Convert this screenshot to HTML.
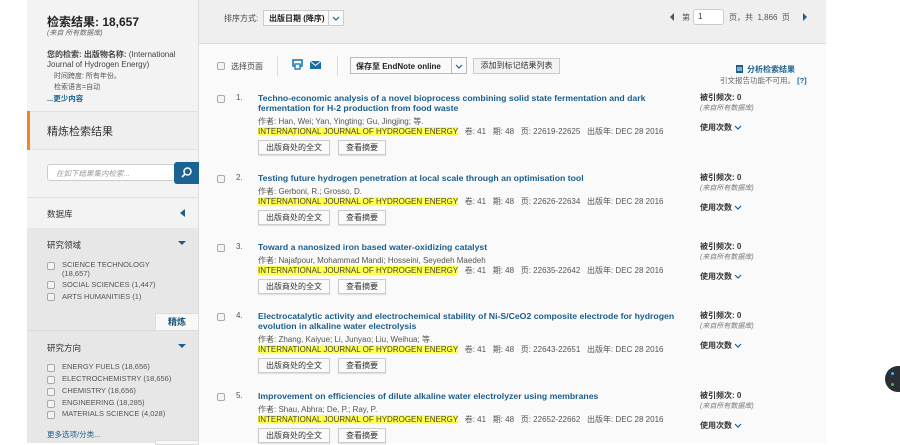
<!DOCTYPE html>
<html><head><meta charset="utf-8"><style>
*{box-sizing:border-box;margin:0;padding:0}
body{width:900px;height:443px;overflow:hidden;background:#fff;font-family:"Liberation Sans","Noto Sans CJK SC",sans-serif;color:#333;position:relative}
.a{position:absolute;white-space:nowrap}
.cb{position:absolute;width:8px;height:8px;border:1px solid #aaa;border-radius:2px;background:#f4f4f4}
.rec{position:absolute;left:258px;width:440px}
.rec .t{font-size:8.7px;font-weight:bold;color:#1a5e8e;line-height:10px;white-space:nowrap}
.rec .au{font-size:8px;color:#555;line-height:10px;margin-top:4px;white-space:nowrap}
.rec .jn{font-size:8px;color:#555;line-height:10px;white-space:nowrap}
.rec .jn span.h{background:#ffff4d;color:#444}
.rec .bt{margin-top:3px;height:15px;display:flex}
.btn{display:block;height:15px;line-height:13px;border:1px solid #ccc;background:#fafafa;font-size:8px;color:#333;padding:0 7px;margin-right:8px;box-shadow:0 1px 1px #ddd}
.num{position:absolute;left:236px;font-size:8px;color:#555}
.rt{position:absolute;left:700px;font-size:8px;line-height:10px}
.rt b{color:#333}
.rt i{color:#777;font-size:7px}
.fi{font-size:7.5px;color:#555;line-height:9px}
.chev{display:inline-block;vertical-align:middle}
</style></head><body>
<div class="a" style="left:27px;top:0;width:171px;height:443px;background:#f3f3f3"></div>
<div class="a" style="left:198px;top:0;width:1px;height:443px;background:#ddd"></div>
<div class="a" style="left:47px;top:13px;font-size:12px;font-weight:bold;color:#222">检索结果: 18,657</div>
<div class="a" style="left:47px;top:28px;font-size:7px;font-style:italic;color:#666">(来自 所有数据库)</div>
<div class="a" style="left:47px;top:50px;font-size:8px;color:#444;line-height:10px;white-space:normal;width:140px"><b>您的检索: 出版物名称:</b> (International Journal of Hydrogen Energy)</div>
<div class="a" style="left:54px;top:71px;font-size:7px;color:#555">时间跨度: 所有年份。</div>
<div class="a" style="left:54px;top:82px;font-size:7px;color:#555">检索语言=自动</div>
<div class="a" style="left:47px;top:93px;font-size:7.5px;color:#1a5e8e;font-weight:bold">...更少内容</div>
<div class="a" style="left:27px;top:111px;width:171px;height:39px;background:#efefef;border-top:1px solid #e0e0e0;border-bottom:1px solid #e0e0e0"></div>
<div class="a" style="left:27px;top:111px;width:3px;height:39px;background:#f7831f"></div>
<div class="a" style="left:47px;top:123px;font-size:11px;color:#333">精炼检索结果</div>
<div class="a" style="left:47px;top:164px;width:128px;height:17px;background:#fff;border:1px solid #ccc;border-radius:3px;font-size:7.5px;font-style:italic;color:#999;padding:3px 8px">在如下结果集内检索...</div>
<div class="a" style="left:174px;top:162px;width:25px;height:22px;background:#1a6392;border-radius:3px 0 0 3px"></div>
<svg class="a" style="left:180px;top:166px" width="13" height="13" viewBox="0 0 13 13"><circle cx="7.5" cy="5.5" r="3.5" fill="none" stroke="#fff" stroke-width="1.5"/><line x1="5" y1="8" x2="2" y2="11" stroke="#fff" stroke-width="1.8"/></svg>
<div class="a" style="left:27px;top:197px;width:171px;height:1px;background:#e0e0e0"></div>
<div class="a" style="left:47px;top:208px;font-size:8.5px;color:#333">数据库</div>
<div class="a" style="left:180px;top:209px;width:0;height:0;border-top:4px solid transparent;border-bottom:4px solid transparent;border-right:5px solid #1a5e8e"></div>
<div class="a" style="left:27px;top:228px;width:171px;height:215px;background:#e7e7e7"></div>
<div class="a" style="left:47px;top:239px;font-size:8.5px;color:#333">研究领域</div>
<div class="a" style="left:178px;top:241px;border-left:4px solid transparent;border-right:4px solid transparent;border-top:4px solid #1a5e8e"></div>
<div class="cb" style="left:47px;top:262px"></div><div class="a fi" style="left:62px;top:260px">SCIENCE TECHNOLOGY<br>(18,657)</div>
<div class="cb" style="left:47px;top:281px"></div><div class="a fi" style="left:62px;top:280px">SOCIAL SCIENCES (1,447)</div>
<div class="cb" style="left:47px;top:293px"></div><div class="a fi" style="left:62px;top:292px">ARTS HUMANITIES (1)</div>
<div class="a" style="left:155px;top:313px;width:44px;height:18px;background:#f8f8f8;border:1px solid #ddd;font-size:9px;color:#1a4f78;text-align:center;line-height:16px;font-weight:bold">精炼</div>
<div class="a" style="left:27px;top:330px;width:128px;height:1px;background:#d8d8d8"></div>
<div class="a" style="left:47px;top:342px;font-size:8.5px;color:#333">研究方向</div>
<div class="a" style="left:178px;top:344px;border-left:4px solid transparent;border-right:4px solid transparent;border-top:4px solid #1a5e8e"></div>
<div class="cb" style="left:47px;top:364px"></div><div class="a fi" style="left:62px;top:362px">ENERGY FUELS (18,656)</div>
<div class="cb" style="left:47px;top:376px"></div><div class="a fi" style="left:62px;top:374px">ELECTROCHEMISTRY (18,656)</div>
<div class="cb" style="left:47px;top:388px"></div><div class="a fi" style="left:62px;top:386px">CHEMISTRY (18,656)</div>
<div class="cb" style="left:47px;top:400px"></div><div class="a fi" style="left:62px;top:398px">ENGINEERING (18,285)</div>
<div class="cb" style="left:47px;top:411px"></div><div class="a fi" style="left:62px;top:409px">MATERIALS SCIENCE (4,028)</div>
<div class="a" style="left:47px;top:429px;font-size:7.5px;color:#1a5e8e">更多选项/分类...</div>
<div class="a" style="left:155px;top:440px;width:44px;height:5px;background:#f8f8f8;border:1px solid #ddd"></div>
<div class="a" style="left:199px;top:0;width:627px;height:443px;background:#fafafa"></div>
<div class="a" style="left:199px;top:0;width:627px;height:44px;background:#efefef;border-bottom:1px solid #ddd"></div>
<div class="a" style="left:224px;top:13px;font-size:8px;color:#444">排序方式:</div>
<div class="a" style="left:263px;top:10px;width:81px;height:16px;border:1px solid #ccc;background:#fafafa;font-size:8px;color:#222;padding:2px 5px;font-weight:bold">出版日期 (降序)</div>
<div class="a" style="left:328px;top:10px;width:1px;height:16px;background:#ccc"></div>
<svg class="a" style="left:332px;top:16px" width="8" height="5"><path d="M1 1L4 4L7 1" stroke="#1a5e8e" stroke-width="1.2" fill="none"/></svg>
<div class="a" style="left:670px;top:13px;border-top:4px solid transparent;border-bottom:4px solid transparent;border-right:4px solid #555"></div>
<div class="a" style="left:682px;top:12px;font-size:8px;color:#555">第</div>
<div class="a" style="left:693px;top:9px;width:31px;height:16px;background:#fff;border:1px solid #ccc;border-radius:3px;font-size:8px;padding:2px 4px">1</div>
<div class="a" style="left:729px;top:12px;font-size:8px;color:#555">页，共 &nbsp;1,866 &nbsp;页</div>
<div class="a" style="left:803px;top:13px;border-top:4px solid transparent;border-bottom:4px solid transparent;border-left:4px solid #1a5e8e"></div>
<div class="cb" style="left:217px;top:62px"></div>
<div class="a" style="left:231px;top:61px;font-size:8px;color:#444">选择页面</div>
<div class="a" style="left:277px;top:56px;width:1px;height:20px;background:#ddd"></div>
<svg class="a" style="left:292px;top:59px" width="11" height="11"><rect x="1" y="1" width="9" height="6" fill="none" stroke="#1a7ab8" stroke-width="1.6"/><rect x="3" y="5" width="5" height="5" fill="#fff" stroke="#1a7ab8" stroke-width="1.4"/></svg>
<svg class="a" style="left:310px;top:61px" width="11" height="8"><rect width="11" height="8" fill="#1a6ea8"/><path d="M0 0L5.5 4.5L11 0" stroke="#fff" fill="none"/></svg>
<div class="a" style="left:337px;top:56px;width:1px;height:20px;background:#ddd"></div>
<div class="a" style="left:350px;top:57px;width:117px;height:17px;border:1px solid #bbb;background:#fafafa;font-size:8px;color:#222;padding:3px 5px;font-weight:bold">保存至 EndNote online</div>
<div class="a" style="left:451px;top:57px;width:1px;height:17px;background:#bbb"></div>
<svg class="a" style="left:455px;top:64px" width="8" height="5"><path d="M1 1L4 4L7 1" stroke="#1a5e8e" stroke-width="1.2" fill="none"/></svg>
<div class="a" style="left:473px;top:58px;width:87px;height:16px;border:1px solid #ccc;background:#f3f3f3;font-size:8px;color:#333;text-align:center;line-height:14px">添加到标记结果列表</div>
<svg class="a" style="left:736px;top:65px" width="8" height="8"><rect width="7" height="8" fill="#1a5e8e"/><line x1="1" y1="3" x2="6" y2="3" stroke="#fff"/><line x1="1" y1="5" x2="6" y2="5" stroke="#fff"/></svg>
<div class="a" style="left:747px;top:64px;font-size:8px;color:#1a5e8e;font-weight:bold">分析检索结果</div>
<div class="a" style="left:720px;top:75px;font-size:7.5px;color:#666">引文报告功能不可用。 <b style="color:#1a5e8e">[?]</b></div>

<div class="cb" style="left:217px;top:95px"></div><div class="num" style="top:93px">1.</div>
<div class="rec" style="top:93px"><div class="t">Techno-economic analysis of a novel bioprocess combining solid state fermentation and dark<br>fermentation for H-2 production from food waste</div><div class="au">作者: Han, Wei; Yan, Yingting; Gu, Jingjing; 等.</div><div class="jn"><span class="h">INTERNATIONAL JOURNAL OF HYDROGEN ENERGY</span> &nbsp; 卷: 41 &nbsp; 期: 48 &nbsp; 页: 22619-22625 &nbsp; 出版年: DEC 28 2016</div><div class="bt"><span class="btn">出版商处的全文</span><span class="btn">查看摘要</span></div></div>
<div class="rt" style="top:93px"><b>被引频次: 0</b><br><i>(来自所有数据库)</i></div><div class="rt" style="top:123px"><b>使用次数</b> <svg class="chev" width="8" height="5"><path d="M1 1L4 4L7 1" stroke="#1a5e8e" stroke-width="1.2" fill="none"/></svg></div>

<div class="cb" style="left:217px;top:175px"></div><div class="num" style="top:173px">2.</div>
<div class="rec" style="top:173px"><div class="t">Testing future hydrogen penetration at local scale through an optimisation tool</div><div class="au">作者: Gerboni, R.; Grosso, D.</div><div class="jn"><span class="h">INTERNATIONAL JOURNAL OF HYDROGEN ENERGY</span> &nbsp; 卷: 41 &nbsp; 期: 48 &nbsp; 页: 22626-22634 &nbsp; 出版年: DEC 28 2016</div><div class="bt"><span class="btn">出版商处的全文</span><span class="btn">查看摘要</span></div></div>
<div class="rt" style="top:173px"><b>被引频次: 0</b><br><i>(来自所有数据库)</i></div><div class="rt" style="top:203px"><b>使用次数</b> <svg class="chev" width="8" height="5"><path d="M1 1L4 4L7 1" stroke="#1a5e8e" stroke-width="1.2" fill="none"/></svg></div>

<div class="cb" style="left:217px;top:244px"></div><div class="num" style="top:242px">3.</div>
<div class="rec" style="top:242px"><div class="t">Toward a nanosized iron based water-oxidizing catalyst</div><div class="au">作者: Najafpour, Mohammad Mandi; Hosseini, Seyedeh Maedeh</div><div class="jn"><span class="h">INTERNATIONAL JOURNAL OF HYDROGEN ENERGY</span> &nbsp; 卷: 41 &nbsp; 期: 48 &nbsp; 页: 22635-22642 &nbsp; 出版年: DEC 28 2016</div><div class="bt"><span class="btn">出版商处的全文</span><span class="btn">查看摘要</span></div></div>
<div class="rt" style="top:242px"><b>被引频次: 0</b><br><i>(来自所有数据库)</i></div><div class="rt" style="top:272px"><b>使用次数</b> <svg class="chev" width="8" height="5"><path d="M1 1L4 4L7 1" stroke="#1a5e8e" stroke-width="1.2" fill="none"/></svg></div>

<div class="cb" style="left:217px;top:313px"></div><div class="num" style="top:311px">4.</div>
<div class="rec" style="top:311px"><div class="t">Electrocatalytic activity and electrochemical stability of Ni-S/CeO2 composite electrode for hydrogen<br>evolution in alkaline water electrolysis</div><div class="au">作者: Zhang, Kaiyue; Li, Junyao; Liu, Weihua; 等.</div><div class="jn"><span class="h">INTERNATIONAL JOURNAL OF HYDROGEN ENERGY</span> &nbsp; 卷: 41 &nbsp; 期: 48 &nbsp; 页: 22643-22651 &nbsp; 出版年: DEC 28 2016</div><div class="bt"><span class="btn">出版商处的全文</span><span class="btn">查看摘要</span></div></div>
<div class="rt" style="top:311px"><b>被引频次: 0</b><br><i>(来自所有数据库)</i></div><div class="rt" style="top:341px"><b>使用次数</b> <svg class="chev" width="8" height="5"><path d="M1 1L4 4L7 1" stroke="#1a5e8e" stroke-width="1.2" fill="none"/></svg></div>

<div class="cb" style="left:217px;top:393px"></div><div class="num" style="top:391px">5.</div>
<div class="rec" style="top:391px"><div class="t">Improvement on efficiencies of dilute alkaline water electrolyzer using membranes</div><div class="au">作者: Shau, Abhra; De, P.; Ray, P.</div><div class="jn"><span class="h">INTERNATIONAL JOURNAL OF HYDROGEN ENERGY</span> &nbsp; 卷: 41 &nbsp; 期: 48 &nbsp; 页: 22652-22662 &nbsp; 出版年: DEC 28 2016</div><div class="bt"><span class="btn">出版商处的全文</span><span class="btn">查看摘要</span></div></div>
<div class="rt" style="top:391px"><b>被引频次: 0</b><br><i>(来自所有数据库)</i></div><div class="rt" style="top:421px"><b>使用次数</b> <svg class="chev" width="8" height="5"><path d="M1 1L4 4L7 1" stroke="#1a5e8e" stroke-width="1.2" fill="none"/></svg></div>

<div class="a" style="left:885px;top:366px;width:30px;height:26px;border-radius:13px;background:#2a2f35"></div>
<div class="a" style="left:891px;top:372px;width:3px;height:3px;background:#3ab0ff;border-radius:2px"></div>
<div class="a" style="left:891px;top:383px;width:3px;height:3px;background:#3c3;border-radius:2px"></div>
</body></html>
